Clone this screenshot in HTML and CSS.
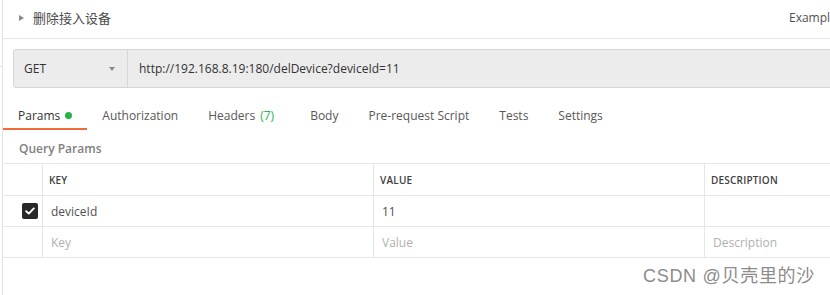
FILE: index.html
```html
<!DOCTYPE html>
<html>
<head>
<meta charset="utf-8">
<link rel="stylesheet" href="styles.css">
</head>
<body>
<div class="stub"></div>
<div class="panel">
  <div class="header">
    <div class="title"><span class="caret"></span><span>删除接入设备</span></div>
    <div class="examples">Examples</div>
  </div>
  <div class="urlbar">
    <div class="method"><span>GET</span><span class="drop"></span></div>
    <div class="url">http://192.168.8.19:180/delDevice?deviceId=11</div>
  </div>
  <div class="tabs">
    <div class="tab active">Params <span class="dot"></span></div>
    <div class="tab">Authorization</div>
    <div class="tab wide">Headers <span class="count">(7)</span></div>
    <div class="tab">Body</div>
    <div class="tab">Pre-request Script</div>
    <div class="tab">Tests</div>
    <div class="tab">Settings</div>
  </div>
  <div class="section">Query Params</div>
  <div class="table">
    <div class="row head">
      <div class="cell chk"></div>
      <div class="cell key">KEY</div>
      <div class="cell val">VALUE</div>
      <div class="cell desc">DESCRIPTION</div>
    </div>
    <div class="row">
      <div class="cell chk"><span class="box"><svg width="10" height="8" viewBox="0 0 10 8"><path d="M1.2 4.2 L3.8 6.6 L8.8 1.4" fill="none" stroke="#fff" stroke-width="1.9" stroke-linecap="round" stroke-linejoin="round"/></svg></span></div>
      <div class="cell key body">deviceId</div>
      <div class="cell val body">11</div>
      <div class="cell desc body"></div>
    </div>
    <div class="row">
      <div class="cell chk"></div>
      <div class="cell key body ph">Key</div>
      <div class="cell val body ph">Value</div>
      <div class="cell desc body ph">Description</div>
    </div>
  </div>
</div>
<div class="watermark">CSDN @贝壳里的沙</div>
</body>
</html>
```

FILE: styles.css
```css
html, body {
  margin: 0;
  padding: 0;
  background: #ffffff;
  overflow: hidden;
  width: 830px;
  height: 295px;
}
body {
  position: relative;
  font-family: "Open Sans", "Noto Sans CJK SC", sans-serif;
  color: #505050;
}
.stub {
  position: absolute;
  left: 0;
  top: 66px;
  width: 2px;
  height: 1px;
  background: #e2e2e2;
}
.panel {
  margin-left: 2px;
  border-left: 1px solid #e2e2e2;
  width: 900px;
  height: 295px;
}
.header {
  display: flex;
  align-items: center;
  height: 35px;
  padding-bottom: 3px;
  border-bottom: 1px solid #e6e6e6;
}
.title {
  flex: 0 0 786px;
  display: flex;
  align-items: center;
  font-size: 13px;
  color: #4a4a4a;
}
.caret {
  width: 0;
  height: 0;
  border-top: 3.5px solid transparent;
  border-bottom: 3.5px solid transparent;
  border-left: 5px solid #8a8a8a;
  margin-left: 16px;
  margin-right: 9px;
}
.examples {
  font-size: 12px;
  color: #505050;
  white-space: nowrap;
}
.urlbar {
  display: flex;
  margin: 10px 0 0 10px;
  height: 37px;
  border: 1px solid #d6d6d6;
  border-radius: 3px 0 0 3px;
  background: #ececec;
}
.method {
  flex: 0 0 114px;
  display: flex;
  align-items: center;
  justify-content: space-between;
  padding: 0 12px 0 10px;
  box-sizing: border-box;
  border-right: 1px solid #d6d6d6;
  font-size: 12px;
  color: #333;
}
.drop {
  width: 0;
  height: 0;
  border-left: 3.5px solid transparent;
  border-right: 3.5px solid transparent;
  border-top: 4px solid #8a8a8a;
}
.url {
  display: flex;
  align-items: center;
  padding-left: 11px;
  font-size: 12px;
  color: #333;
}
.tabs {
  display: flex;
  margin-top: 11px;
}
.tab {
  display: flex;
  align-items: center;
  gap: 5px;
  height: 26px;
  padding: 3px 15px 0 15px;
  font-size: 12px;
  color: #585858;
  border-bottom: 2px solid transparent;
}
.tab.wide {
  padding-right: 21px;
}
.tab.active {
  color: #333;
  border-bottom-color: #f26b3a;
}
.dot {
  width: 7px;
  height: 7px;
  border-radius: 50%;
  background: #26b34a;
}
.count {
  color: #26b34a;
}
.section {
  height: 30px;
  padding-top: 3px;
  display: flex;
  align-items: center;
  padding-left: 16px;
  font-size: 12px;
  font-weight: 600;
  color: #808080;
}
.table {
  border-top: 1px solid #e6e6e6;
}
.row {
  display: flex;
  height: 30px;
  border-bottom: 1px solid #e6e6e6;
}
.row.head {
  height: 31px;
}
.cell {
  display: flex;
  align-items: center;
  box-sizing: border-box;
  font-size: 12px;
  color: #505050;
}
.chk {
  flex: 0 0 40px;
  justify-content: flex-end;
  padding-right: 4px;
  border-right: 1px solid #e6e6e6;
}
.key, .val {
  flex: 0 0 331px;
  border-right: 1px solid #e6e6e6;
  padding-left: 6px;
}
.desc {
  flex: 0 0 200px;
  padding-left: 6px;
}
.head .cell {
  font-size: 10px;
  font-weight: 600;
  color: #404040;
  letter-spacing: 0.2px;
}
.cell.body {
  padding-left: 8px;
}
.cell.ph {
  color: #b0b0b0;
}
.box {
  width: 16px;
  height: 16px;
  border-radius: 2px;
  background: #282828;
  display: flex;
  align-items: center;
  justify-content: center;
}
.watermark {
  position: absolute;
  left: 643px;
  top: 261px;
  font-family: "Liberation Sans", "Noto Sans CJK SC", sans-serif;
  font-size: 18px;
  color: #8c8c8c;
  letter-spacing: 0.7px;
  white-space: nowrap;
}
```
